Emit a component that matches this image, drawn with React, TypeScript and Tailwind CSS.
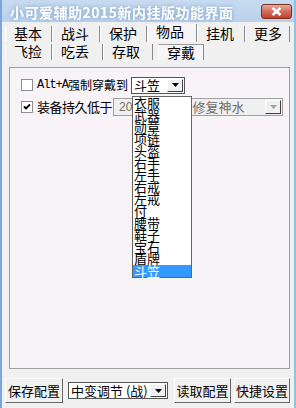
import React from "react";

const items = [
  "衣服",
  "武器",
  "勋章",
  "项链",
  "头盔",
  "右手",
  "左手",
  "右戒",
  "左戒",
  "付",
  "腰带",
  "鞋子",
  "宝石",
  "盾牌",
  "斗笠",
];

const Arrow = ({ disabled }: { disabled?: boolean }) => (
  <div className="w-[16px] h-full bg-[#f0f0f0] border-t border-l border-t-white border-l-white border-r border-b border-r-[#404040] border-b-[#404040] flex items-center justify-center">
    <svg width="7" height="4" viewBox="0 0 7 4">
      <path d="M0 0H7L3.5 4Z" fill={disabled ? "#a0a0a0" : "#000"} />
    </svg>
  </div>
);

const Check = ({ checked }: { checked?: boolean }) => (
  <div className="w-[12px] h-[12px] bg-white border border-[#8f8f8f] flex items-center justify-center shrink-0">
    {checked && (
      <svg width="8" height="8" viewBox="0 0 8 8">
        <path d="M1 3.5L3 5.5L7 1.5" stroke="#000" strokeWidth="1.8" fill="none" />
      </svg>
    )}
  </div>
);

const Btn = ({ label, w }: { label: string; w: string }) => (
  <div
    className={`${w} h-[25px] flex items-center justify-center bg-[#f0f0f0] border-t border-l border-t-white border-l-white border-r border-b border-r-[#696969] border-b-[#696969] text-[13px]`}
  >
    {label}
  </div>
);

const Tab = ({ label, w, active, focus }: { label: string; w: string; active?: boolean; focus?: boolean }) => (
  <div
    className={`${w} flex items-start pl-[8px] border-r border-r-[#8a8a8a] border-l border-l-white ${
      active ? "-mt-[2px] bg-[#f7f4f7]" : ""
    } ${focus ? "border-t border-t-[#9a9a9a] bg-[#f7f4f7]" : ""}`}
  >
    {label}
  </div>
);

export default function App() {
  return (
    <div className="w-[296px] h-[408px] bg-[#f0f0f0] overflow-hidden flex flex-col font-['Noto_Sans_CJK_SC',sans-serif] text-[13px] leading-[14px] text-black border-l-2 border-l-[#7aa7d8] border-r-2 border-r-[#86c6ec]">
      {/* title */}
      <div className="h-[22px] shrink-0 bg-gradient-to-b from-[#c7dbf0] to-[#b9d1ea] flex items-center pl-[8px] pr-[2px] pt-[1px]">
        <span className="text-white font-bold text-[14px] tracking-[0.5px] drop-shadow-[0_0_2px_#7a9cc4]">
          小可爱辅助2015新内挂版功能界面
        </span>
        <div className="ml-auto w-[31px] h-[15px] rounded-[3px] border border-[#7b2d22] bg-gradient-to-b from-[#e9a89b] via-[#d26b5a] to-[#c0402c] flex items-center justify-center">
          <svg width="11" height="9" viewBox="0 0 11 9">
            <path d="M1.5 1L9.5 8M9.5 1L1.5 8" stroke="#fff" strokeWidth="2.6" />
          </svg>
        </div>
      </div>

      {/* tabs */}
      <div className="flex flex-col pl-[3px] pt-[4px] text-[14px] leading-[14px]">
        <div className="flex h-[16px]">
          <Tab label="基本" w="w-[47px]" />
          <Tab label="战斗" w="w-[48px]" />
          <Tab label="保护" w="w-[47px]" />
          <Tab label="物品" w="w-[50px]" active />
          <Tab label="挂机" w="w-[48px]" />
          <Tab label="更多" w="w-[45px]" />
        </div>
        <div className="flex h-[18px] pt-[2px]">
          <Tab label="飞捡" w="w-[47px]" />
          <Tab label="吃丢" w="w-[51px]" />
          <Tab label="存取" w="w-[50px]" />
          <div className="w-[5px]" />
          <Tab label="穿戴" w="w-[46px]" focus />
        </div>
      </div>

      {/* panel */}
      <div className="relative mt-[7px] ml-[7px] mr-[4px] h-[302px] shrink-0 bg-[#f7f3f7] border border-[#a0a0a0] text-[12px]">
        <div className="flex items-center pl-[11px] pt-[8px] h-[26px]">
          <Check />
          <span className="ml-[4px] font-['Liberation_Mono',monospace] text-[12px] tracking-[-1px]">Alt+A</span>
          <span>强制穿戴到</span>
          <div className="ml-[3px] w-[54px] h-[17px] bg-white border border-[#555] flex items-center justify-between pl-[2px] p-[1px] text-[13px]">
            <span>斗笠</span>
            <Arrow />
          </div>
        </div>
        <div className="flex items-center pl-[11px] mt-[4px] h-[18px]">
          <Check checked />
          <span className="ml-[4px] text-[13px] tracking-[-0.5px]">装备持久低于</span>
          <div className="ml-[1px] w-[170px] h-[18px] bg-[#f0f0f0] border border-[#a0a0a0] flex items-center p-[1px]">
            <span className="pl-[4px] text-[#6d6d6d] font-['Liberation_Sans',sans-serif] text-[12px]">20</span>
            <span className="ml-[60px] text-[#6d6d6d] text-[13px]">修复神水</span>
            <div className="ml-auto h-full">
              <Arrow disabled />
            </div>
          </div>
        </div>

        {/* open list */}
        <div className="absolute left-[122px] top-[28px] w-[60px] h-[182px] bg-white border border-[#646464] flex flex-col text-[13px] leading-[12px]">
          {items.map((it) => (
            <div
              key={it}
              className={`h-[12px] pl-[1px] shrink-0 ${it === "斗笠" ? "bg-[#3399ff] text-white" : ""}`}
            >
              {it}
            </div>
          ))}
        </div>
      </div>

      {/* bottom */}
      <div className="flex items-center pl-[3px] mt-[9px] text-[14px]">
        <Btn label="保存配置" w="w-[58px]" />
        <div className="ml-[5px] w-[100px] h-[17px] bg-white border border-[#555] flex items-center justify-between pl-[2px] p-[1px] text-[13px]">
          <span>中变调节 (战)</span>
          <Arrow />
        </div>
        <div className="ml-[6px]">
          <Btn label="读取配置" w="w-[57px]" />
        </div>
        <div className="ml-[3px]">
          <Btn label="快捷设置" w="w-[56px]" />
        </div>
      </div>
    </div>
  );
}
